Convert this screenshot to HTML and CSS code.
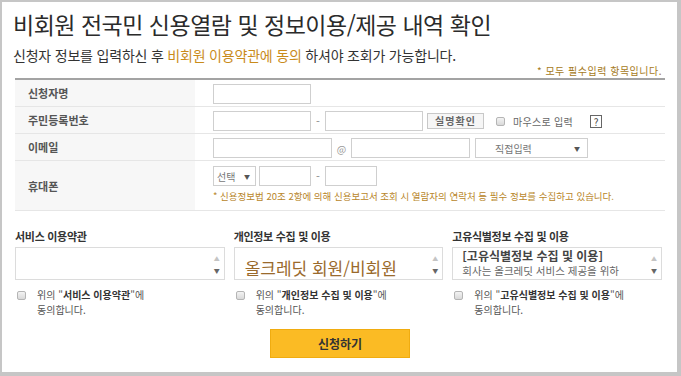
FILE: index.html
```html
<!doctype html>
<html lang="ko">
  <head>
    <meta charset="UTF-8" />
    <meta name="viewport" content="width=device-width, initial-scale=1.0" />
    <title>비회원 전국민 신용열람 및 정보이용/제공 내역 확인</title>
    <link rel="stylesheet" href="styles.css">
  </head>
  <body>
    <div class="window">
      <h1 class="title">비회원 전국민 신용열람 및 정보이용/제공 내역 확인</h1>
      <p class="lead">신청자 정보를 입력하신 후 <em>비회원 이용약관에 동의</em> 하셔야 조회가 가능합니다.</p>
      <p class="required">* 모두 필수입력 항목입니다.</p>

      <div class="form">
        <div class="row">
          <div class="label">신청자명</div>
          <div class="field">
            <input class="input in-md" type="text">
          </div>
        </div>
        <div class="row">
          <div class="label">주민등록번호</div>
          <div class="field">
            <input class="input in-md" type="text">
            <span class="dash">-</span>
            <input class="input in-md" type="password">
            <button class="btn-check">실명확인</button>
            <label class="mouse"><span class="check"></span>마우스로 입력</label>
            <span class="help">?</span>
          </div>
        </div>
        <div class="row">
          <div class="label">이메일</div>
          <div class="field">
            <input class="input in-lg" type="text">
            <span class="at">@</span>
            <input class="input in-lg" type="text">
            <div class="select select-mail"><span>직접입력</span><span class="caret">▼</span></div>
          </div>
        </div>
        <div class="row row-tall">
          <div class="label">휴대폰</div>
          <div class="field stack">
            <div class="line">
              <div class="select select-phone"><span>선택</span><span class="caret">▼</span></div>
              <input class="input in-sm" type="text">
              <span class="dash">-</span>
              <input class="input in-sm" type="text">
            </div>
            <p class="notice">* 신용정보법 20조 2항에 의해 신용보고서 조회 시 열람자의 연락처 등 필수 정보를 수집하고 있습니다.</p>
          </div>
        </div>
      </div>

      <div class="agree">
        <div class="agree-item">
          <h3>서비스 이용약관</h3>
          <div class="terms">
            <div class="terms-body"></div>
            <div class="scroll"><span class="up">▲</span><span>▼</span></div>
          </div>
          <div class="consent">
            <span class="check"></span>
            <p>위의 "<b>서비스 이용약관</b>"에<br>동의합니다.</p>
          </div>
        </div>
        <div class="agree-item">
          <h3>개인정보 수집 및 이용</h3>
          <div class="terms">
            <div class="terms-body terms-big">올크레딧 회원/비회원</div>
            <div class="scroll"><span class="up">▲</span><span>▼</span></div>
          </div>
          <div class="consent">
            <span class="check"></span>
            <p>위의 "<b>개인정보 수집 및 이용</b>"에<br>동의합니다.</p>
          </div>
        </div>
        <div class="agree-item">
          <h3>고유식별정보 수집 및 이용</h3>
          <div class="terms">
            <div class="terms-body terms-text">
              <strong>[고유식별정보 수집 및 이용]</strong><br>
              회사는 올크레딧 서비스 제공을 위하
            </div>
            <div class="scroll"><span class="up">▲</span><span>▼</span></div>
          </div>
          <div class="consent">
            <span class="check"></span>
            <p>위의 "<b>고유식별정보 수집 및 이용</b>"에<br>동의합니다.</p>
          </div>
        </div>
      </div>

      <div class="actions">
        <button class="submit">신청하기</button>
      </div>
    </div>
  </body>
</html>
```

FILE: styles.css
```css
body {
  margin: 0;
  font-family: "Noto Sans CJK KR", "Noto Sans", sans-serif;
  color: #333;
  background-color: #fff;
}
.window {
  box-sizing: border-box;
  width: 681px;
  height: 376px;
  border: 2px solid #c6c6c6;
  border-right-width: 4px;
  border-bottom-width: 4px;
  padding: 0 12px 0 13px;
  overflow: hidden;
}
.title {
  margin: 7px 0 0 -2px;
  font-size: 23px;
  font-weight: 400;
  line-height: 30px;
  letter-spacing: -0.5px;
  color: #2b2b2b;
}
.lead {
  margin: 7px 0 0 -2px;
  font-size: 14px;
  line-height: 18px;
  letter-spacing: -0.2px;
  color: #333;
}
.lead em {
  font-style: normal;
  color: #c98b1a;
}
.required {
  margin: 1px 0 0;
  padding-right: 3px;
  text-align: right;
  font-size: 10px;
  line-height: 12px;
  letter-spacing: 0.5px;
  color: #a57a22;
}
.form {
  margin-top: 1px;
  border-top: 2px solid #a3a3a3;
}
.row {
  display: flex;
  height: 26px;
  border-bottom: 1px solid #e6e6e6;
}
.row-tall {
  height: 49px;
}
.label {
  box-sizing: border-box;
  width: 180px;
  display: flex;
  align-items: center;
  padding-left: 13px;
  background-color: #f7f7f7;
  font-size: 11px;
  font-weight: 700;
  color: #555;
}
.field {
  display: flex;
  align-items: center;
  padding: 2px 0 0 18px;
}
.field.stack {
  flex-direction: column;
  align-items: flex-start;
  padding-top: 5px;
}
.line {
  display: flex;
  align-items: center;
}
.input {
  box-sizing: border-box;
  height: 20px;
  margin: 0;
  border: 1px solid #cfcfcf;
  background-color: #fff;
}
.in-md { width: 98px; }
.in-lg { width: 119px; }
.in-sm { width: 52px; }
.dash {
  width: 14px;
  text-align: center;
  font-size: 11px;
  color: #888;
}
.at {
  width: 19px;
  text-align: center;
  font-size: 10px;
  color: #999;
}
.btn-check {
  box-sizing: border-box;
  width: 57px;
  height: 16px;
  margin-left: 4px;
  padding: 0;
  border: 1px solid #c8c8c8;
  background-color: #f6f6f6;
  font-family: inherit;
  font-size: 10px;
  font-weight: 700;
  line-height: 14px;
  letter-spacing: 1px;
  color: #666;
}
.mouse {
  display: flex;
  align-items: center;
  gap: 8px;
  margin-left: 12px;
  font-size: 10px;
  letter-spacing: 0.3px;
  color: #666;
}
.help {
  box-sizing: border-box;
  width: 12px;
  height: 13px;
  margin-left: 17px;
  border: 1px solid #666;
  font-size: 10px;
  line-height: 11px;
  text-align: center;
  color: #444;
}
.check {
  box-sizing: border-box;
  display: inline-block;
  flex: none;
  width: 9px;
  height: 9px;
  border: 1px solid #b5b5b5;
  border-radius: 2px;
  background: linear-gradient(#f3f3f3, #d9d9d9);
}
.select {
  box-sizing: border-box;
  display: flex;
  align-items: center;
  justify-content: space-between;
  height: 20px;
  border: 1px solid #cfcfcf;
  background-color: #fff;
  font-size: 10px;
  color: #777;
}
.select-mail {
  width: 113px;
  margin-left: 5px;
  padding: 0 7px 0 19px;
}
.select-phone {
  width: 43px;
  margin-right: 3px;
  padding: 0 5px 0 3px;
}
.caret {
  font-size: 6px;
  color: #555;
}
.notice {
  margin: 4px 0 0;
  font-size: 9.5px;
  line-height: 12px;
  color: #b8862a;
}
.agree {
  display: grid;
  grid-template-columns: repeat(3, 1fr);
  gap: 9px;
  margin: 18px 3px 0 0;
}
.agree h3 {
  margin: 0;
  font-size: 11px;
  font-weight: 700;
  line-height: 14px;
  letter-spacing: -0.3px;
  color: #333;
}
.terms {
  box-sizing: border-box;
  display: flex;
  height: 33px;
  margin-top: 4px;
  border: 1px solid #dcdcdc;
}
.terms-body {
  flex: 1;
  overflow: hidden;
}
.terms-big {
  padding: 9px 0 0 10px;
  font-size: 17px;
  line-height: 21px;
  color: #9a6a2c;
}
.terms-text {
  padding: 1px 0 0 9px;
  font-size: 10.5px;
  line-height: 14px;
  color: #666;
}
.terms-text strong {
  font-size: 12px;
  color: #444;
}
.scroll {
  width: 14px;
  display: flex;
  flex-direction: column;
  justify-content: space-between;
  align-items: center;
  padding: 6px 0 4px;
  font-size: 6px;
  color: #666;
}
.scroll .up {
  color: #c4c4c4;
}
.consent {
  display: flex;
  align-items: flex-start;
  gap: 11px;
  margin: 8px 0 0 2px;
}
.consent .check {
  margin-top: 3px;
}
.consent p {
  margin: 0;
  font-size: 10px;
  line-height: 14.5px;
  color: #555;
}
.consent b {
  color: #333;
}
.actions {
  display: flex;
  justify-content: center;
  margin-top: 12px;
}
.submit {
  width: 140px;
  height: 29px;
  border: 1px solid #f0ac10;
  background-color: #fbbb24;
  font-family: inherit;
  font-size: 12px;
  font-weight: 700;
  color: #333;
  cursor: pointer;
}
```
